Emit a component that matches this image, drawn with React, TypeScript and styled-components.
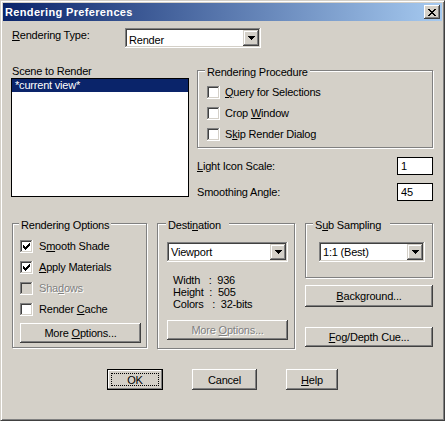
import React from 'react';
import styled, { createGlobalStyle, css } from 'styled-components';

const FACE = '#d4d0c8';

const GlobalStyle = createGlobalStyle`
  html, body { margin: 0; padding: 0; background: ${FACE}; }
  body { font-family: "Liberation Sans", Arial, sans-serif; font-size: 11px; }
  *, *::before, *::after { box-sizing: border-box; }
`;

const raised = css`
  box-shadow: inset -1px -1px 0 #404040, inset 1px 1px 0 #fff,
    inset -2px -2px 0 #808080, inset 2px 2px 0 ${FACE};
`;

const sunken = css`
  box-shadow: inset -1px -1px 0 #fff, inset 1px 1px 0 #808080,
    inset -2px -2px 0 ${FACE}, inset 2px 2px 0 #404040;
`;

function pixelPath(rows: string[]): string {
  let d = '';
  rows.forEach((r, y) => {
    let x = 0;
    while (x < r.length) {
      if (r[x] === 'X') {
        const s = x;
        while (x < r.length && r[x] === 'X') x++;
        d += `M${s} ${y}h${x - s}v1h${-(x - s)}z`;
      } else x++;
    }
  });
  return d;
}

const closePath = pixelPath([
  'XX....XX',
  '.XX..XX.',
  '..XXXX..',
  '...XX...',
  '..XXXX..',
  '.XX..XX.',
  'XX....XX',
]);

const checkPath = pixelPath([
  '......X',
  '.....XX',
  'X...XXX',
  'XX.XXX.',
  'XXXXX..',
  '.XXX...',
  '..X....',
]);

const arrowPath = pixelPath(['XXXXXXX', '.XXXXX.', '..XXX..', '...X...']);

const Window = styled.div`
  width: 445px;
  height: 421px;
  background: ${FACE};
  border: 1px solid;
  border-color: ${FACE} #404040 #404040 ${FACE};
  box-shadow: inset 1px 1px 0 #fff, inset -1px -1px 0 #808080;
  padding: 2px;
  display: flex;
  flex-direction: column;
  color: #000;
  font: 11px "Liberation Sans", Arial, sans-serif;
  letter-spacing: -0.2px;
  overflow: hidden;
`;

const TitleBar = styled.div`
  height: 18px;
  flex: none;
  display: flex;
  align-items: center;
  justify-content: space-between;
  padding: 0 2px;
  background: linear-gradient(to right, #0a246a, #a6caf0);
`;

const TitleText = styled.span`
  color: #fff;
  font-weight: bold;
  letter-spacing: 0.35px;
  white-space: nowrap;
`;

const CloseButton = styled.div`
  width: 16px;
  height: 14px;
  background: ${FACE};
  ${raised}
  display: flex;
  align-items: center;
  justify-content: center;
  padding-right: 1px;
  svg { display: block; }
`;

const Client = styled.div`
  flex: 1;
  display: flex;
  flex-direction: column;
`;

const TopRow = styled.div`
  margin-top: 7px;
  padding-left: 9px;
  display: flex;
  align-items: flex-start;
`;

const RowLabel = styled.span<{ $w: number }>`
  width: ${(p) => p.$w}px;
  padding-top: 1px;
  line-height: 13px;
  white-space: nowrap;
`;

const MidRow = styled.div`
  margin-top: 17px;
  padding-left: 8px;
  display: flex;
  gap: 8px;
  align-items: flex-start;
`;

const SceneColumn = styled.div`
  width: 178px;
  display: flex;
  flex-direction: column;
`;

const SceneLabel = styled.span`
  line-height: 13px;
  padding-left: 1px;
`;

const ListBox = styled.div`
  height: 119px;
  background: #fff;
  border: 1px solid #000;
`;

const ListItem = styled.div<{ $selected?: boolean }>`
  height: 13px;
  line-height: 13px;
  padding-left: 3px;
  white-space: nowrap;
  background: ${(p) => (p.$selected ? '#0a246a' : 'transparent')};
  color: ${(p) => (p.$selected ? '#fff' : '#000')};
`;

const SettingsColumn = styled.div`
  width: 237px;
  margin-top: 5px;
  display: flex;
  flex-direction: column;
`;

const FieldRow = styled.div<{ $mt: number }>`
  margin-top: ${(p) => p.$mt}px;
  height: 18px;
  display: flex;
  align-items: center;
  justify-content: space-between;
  padding-right: 1px;
`;

const FieldLabel = styled.span`
  line-height: 13px;
  white-space: nowrap;
`;

const NumberField = styled.input`
  width: 36px;
  height: 18px;
  margin: 0;
  border: 1px solid #000;
  background: #fff;
  padding: 0 0 0 3px;
  font: inherit;
  letter-spacing: inherit;
  color: #000;
  outline: none;
`;

const GroupBox = styled.div<{ $w: number; $h: number; $pt: number; $pl: number }>`
  position: relative;
  flex: none;
  width: ${(p) => p.$w}px;
  height: ${(p) => p.$h}px;
  border: 1px solid #808080;
  box-shadow: inset 1px 1px 0 #fff, 1px 1px 0 #fff;
  padding: ${(p) => p.$pt}px 0 0 ${(p) => p.$pl}px;
  display: flex;
  flex-direction: column;
  align-items: flex-start;
`;

const GroupTitle = styled.span<{ $left: number; $padR: number }>`
  position: absolute;
  top: -5px;
  left: ${(p) => p.$left - 3}px;
  padding: 0 ${(p) => p.$padR}px 0 2px;
  background: ${FACE};
  line-height: 13px;
  white-space: nowrap;
`;

const CheckList = styled.div<{ $gap: number }>`
  display: flex;
  flex-direction: column;
  gap: ${(p) => p.$gap}px;
`;

const CheckRow = styled.div<{ $gap: number; $disabled?: boolean }>`
  height: 13px;
  display: flex;
  align-items: center;
  gap: ${(p) => p.$gap}px;
  color: ${(p) => (p.$disabled ? '#808080' : '#000')};
  text-shadow: ${(p) => (p.$disabled ? '1px 1px 0 #fff' : 'none')};
`;

const CheckBox = styled.span<{ $disabled?: boolean }>`
  width: 13px;
  height: 13px;
  flex: none;
  background: ${(p) => (p.$disabled ? FACE : '#fff')};
  ${sunken}
  display: flex;
  align-items: center;
  justify-content: center;
  svg { display: block; }
`;

const CheckText = styled.span`
  line-height: 13px;
  white-space: nowrap;
`;

const ComboField = styled.div<{ $w: number }>`
  width: ${(p) => p.$w}px;
  height: 20px;
  flex: none;
  background: #fff;
  ${sunken}
  padding: 2px;
  display: flex;
`;

const ComboValue = styled.span<{ $top: number }>`
  flex: 1;
  padding: ${(p) => p.$top}px 0 0 2px;
  line-height: 16px;
  white-space: nowrap;
`;

const DropButton = styled.span`
  width: 16px;
  height: 16px;
  flex: none;
  background: ${FACE};
  box-shadow: inset -1px -1px 0 #404040, inset 1px 1px 0 ${FACE},
    inset -2px -2px 0 #808080, inset 2px 2px 0 #fff;
  display: flex;
  align-items: center;
  justify-content: center;
  svg { display: block; }
`;

const BottomRow = styled.div`
  margin-top: 22px;
  padding-left: 9px;
  display: flex;
  gap: 10px;
  align-items: flex-start;
`;

const SideColumn = styled.div`
  width: 128px;
  display: flex;
  flex-direction: column;
`;

const InfoText = styled.div`
  margin-top: 12px;
  padding-left: 6px;
  line-height: 12px;
  white-space: pre;
`;

const Btn = styled.button<{ $w: number; $h: number; $mt?: number; $default?: boolean }>`
  position: relative;
  width: ${(p) => p.$w}px;
  height: ${(p) => p.$h}px;
  margin: ${(p) => p.$mt ?? 0}px 0 0 0;
  padding: 0;
  flex: none;
  border: none;
  background: ${FACE};
  font: inherit;
  letter-spacing: inherit;
  color: #000;
  display: flex;
  align-items: center;
  justify-content: center;
  white-space: nowrap;
  ${raised}
  ${(p) =>
    p.$default &&
    css`
      border: 1px solid #000;
      box-shadow: inset -1px -1px 0 #808080, inset 1px 1px 0 #fff;
      &::after {
        content: '';
        position: absolute;
        inset: 3px;
        border: 1px dotted #000;
      }
    `}
  &:disabled {
    color: #808080;
    text-shadow: 1px 1px 0 #fff;
  }
`;

const BtnLabel = styled.span`
  white-space: pre;
`;

const ButtonRow = styled.div`
  margin-top: 20px;
  display: flex;
  justify-content: center;
  gap: 29px;
`;

function Combo({ w, value, textTop = 0 }: { w: number; value: string; textTop?: number }) {
  return (
    <ComboField $w={w}>
      <ComboValue $top={textTop}>{value}</ComboValue>
      <DropButton>
        <svg width="7" height="4" viewBox="0 0 7 4" shapeRendering="crispEdges">
          <path d={arrowPath} fill="#000" />
        </svg>
      </DropButton>
    </ComboField>
  );
}

function Check({
  children,
  checked,
  disabled,
  gap,
}: {
  children: React.ReactNode;
  checked?: boolean;
  disabled?: boolean;
  gap: number;
}) {
  return (
    <CheckRow $gap={gap} $disabled={disabled}>
      <CheckBox $disabled={disabled}>
        {checked && (
          <svg width="7" height="7" viewBox="0 0 7 7" shapeRendering="crispEdges">
            <path d={checkPath} fill="#000" />
          </svg>
        )}
      </CheckBox>
      <CheckText>{children}</CheckText>
    </CheckRow>
  );
}

export default function App() {
  return (
    <>
      <GlobalStyle />
      <Window>
        <TitleBar>
          <TitleText>Rendering Preferences</TitleText>
          <CloseButton aria-label="Close">
            <svg width="8" height="7" viewBox="0 0 8 7" shapeRendering="crispEdges">
              <path d={closePath} fill="#000" />
            </svg>
          </CloseButton>
        </TitleBar>
        <Client>
          <TopRow>
            <RowLabel $w={113}>
              <u>R</u>endering Type:
            </RowLabel>
            <Combo w={136} value="Render" textTop={2} />
          </TopRow>

          <MidRow>
            <SceneColumn>
              <SceneLabel>Scene to Render</SceneLabel>
              <ListBox>
                <ListItem $selected>*current view*</ListItem>
              </ListBox>
            </SceneColumn>
            <SettingsColumn>
              <GroupBox $w={236} $h={78} $pt={15} $pl={9}>
                <GroupTitle $left={10} $padR={2}>Rendering Procedure</GroupTitle>
                <CheckList $gap={8}>
                  <Check gap={5}>
                    <u>Q</u>uery for Selections
                  </Check>
                  <Check gap={5}>
                    Crop <u>W</u>indow
                  </Check>
                  <Check gap={5}>
                    S<u>k</u>ip Render Dialog
                  </Check>
                </CheckList>
              </GroupBox>
              <FieldRow $mt={9}>
                <FieldLabel>
                  <u>L</u>ight Icon Scale:
                </FieldLabel>
                <NumberField readOnly value="1" />
              </FieldRow>
              <FieldRow $mt={8}>
                <FieldLabel>Smoothing Angle:</FieldLabel>
                <NumberField readOnly value="45" />
              </FieldRow>
            </SettingsColumn>
          </MidRow>

          <BottomRow>
            <GroupBox $w={135} $h={125} $pt={16} $pl={7}>
              <GroupTitle $left={9} $padR={2}>Rendering Options</GroupTitle>
              <CheckList $gap={8}>
                <Check gap={6} checked>
                  S<u>m</u>ooth Shade
                </Check>
                <Check gap={6} checked>
                  <u>A</u>pply Materials
                </Check>
                <Check gap={6} disabled>
                  Sha<u>d</u>ows
                </Check>
                <Check gap={6}>
                  Render <u>C</u>ache
                </Check>
              </CheckList>
              <Btn $w={121} $h={20} $mt={7}>
                <BtnLabel>
                  More <u>O</u>ptions...
                </BtnLabel>
              </Btn>
            </GroupBox>

            <GroupBox $w={138} $h={126} $pt={18} $pl={9}>
              <GroupTitle $left={11} $padR={8}>
                Desti<u>n</u>ation
              </GroupTitle>
              <Combo w={121} value="Viewport" />
              <InfoText>
                {'Width   :  936\nHeight  :  505\nColors   :  32-bits'}
              </InfoText>
              <Btn $w={121} $h={20} $mt={10} disabled>
                <BtnLabel>
                  More <u>O</u>ptions...
                </BtnLabel>
              </Btn>
            </GroupBox>

            <SideColumn>
              <GroupBox $w={128} $h={55} $pt={18} $pl={13}>
                <GroupTitle $left={10} $padR={9}>
                  S<u>u</u>b Sampling
                </GroupTitle>
                <Combo w={106} value="1:1 (Best)" />
              </GroupBox>
              <Btn $w={128} $h={22} $mt={7}>
                <BtnLabel>
                  <u>B</u>ackground...
                </BtnLabel>
              </Btn>
              <Btn $w={128} $h={20} $mt={20}>
                <BtnLabel>
                  <u>F</u>og/Depth Cue...
                </BtnLabel>
              </Btn>
            </SideColumn>
          </BottomRow>

          <ButtonRow>
            <Btn $w={56} $h={21} $default>
              <BtnLabel>OK</BtnLabel>
            </Btn>
            <Btn $w={65} $h={21}>
              <BtnLabel>Cancel</BtnLabel>
            </Btn>
            <Btn $w={52} $h={21}>
              <BtnLabel>
                <u>H</u>elp
              </BtnLabel>
            </Btn>
          </ButtonRow>
        </Client>
      </Window>
    </>
  );
}
